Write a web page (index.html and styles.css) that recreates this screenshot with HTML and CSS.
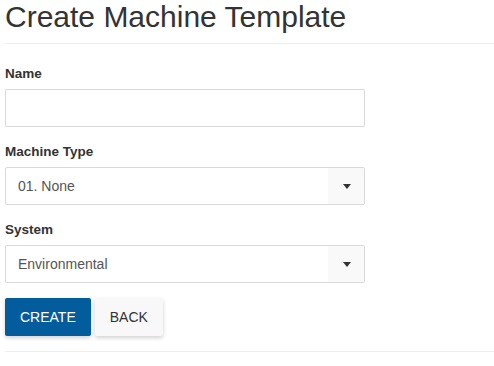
FILE: index.html
```html
<!DOCTYPE html>
<html>
<head>
<meta charset="utf-8">
<link rel="stylesheet" href="styles.css">
</head>
<body>
<div class="page">
  <h2 class="page-header">Create Machine Template</h2>
  <form class="form">
    <div class="form-group">
      <label class="label">Name</label>
      <div class="input"></div>
    </div>
    <div class="form-group">
      <label class="label">Machine Type</label>
      <div class="select">
        <span class="select-value">01. None</span>
        <span class="select-caret"><svg width="8" height="5" viewBox="0 0 8 5"><polygon points="0,0 8,0 4,5" fill="#333"/></svg></span>
      </div>
    </div>
    <div class="form-group">
      <label class="label">System</label>
      <div class="select">
        <span class="select-value">Environmental</span>
        <span class="select-caret"><svg width="8" height="5" viewBox="0 0 8 5"><polygon points="0,0 8,0 4,5" fill="#333"/></svg></span>
      </div>
    </div>
    <div class="actions">
      <button type="button" class="btn btn-primary">CREATE</button>
      <button type="button" class="btn btn-default">BACK</button>
    </div>
  </form>
  <hr class="rule">
</div>
</body>
</html>
```

FILE: styles.css
```css
html, body {
  margin: 0;
  padding: 0;
  background: #fff;
}
body {
  font-family: "Liberation Sans", Arial, sans-serif;
  color: #333;
  font-size: 14px;
}
.page {
  padding-left: 5px;
}
.page-header {
  margin: 0 0 20px 0;
  padding: 0 0 10px 0;
  font-size: 30px;
  font-weight: normal;
  line-height: 33px;
  color: #333;
  border-bottom: 1px solid #eee;
}
.form {
  width: 360px;
}
.form-group {
  margin-bottom: 15px;
}
.label {
  display: block;
  font-size: 13.5px;
  font-weight: bold;
  line-height: 20px;
  margin-bottom: 5px;
  color: #333;
}
.input,
.select {
  box-sizing: border-box;
  height: 38px;
  border: 1px solid #d9d9d9;
  border-radius: 2px;
  background: #fff;
}
.select {
  display: flex;
  align-items: stretch;
}
.select-value {
  flex: 1;
  display: flex;
  align-items: center;
  padding-left: 12px;
  font-size: 14px;
  color: #555;
}
.select-caret {
  width: 36px;
  display: flex;
  align-items: center;
  justify-content: center;
  background: #f9f9f9;
}
.select-caret svg {
  display: block;
  margin-left: 1px;
}
.actions {
  display: flex;
  gap: 4px;
}
.btn {
  height: 38px;
  padding: 0 15px;
  border: none;
  border-radius: 2px;
  font-family: "Liberation Sans", Arial, sans-serif;
  font-size: 14px;
  box-shadow: 0 2px 4px rgba(0, 0, 0, 0.18);
  cursor: pointer;
}
.btn-primary {
  background: #035c9c;
  color: #fff;
}
.btn-default {
  background: #f8f8f8;
  color: #333;
}
.rule {
  margin: 15px 0 0 0;
  border: 0;
  border-top: 1px solid #eee;
}
```
